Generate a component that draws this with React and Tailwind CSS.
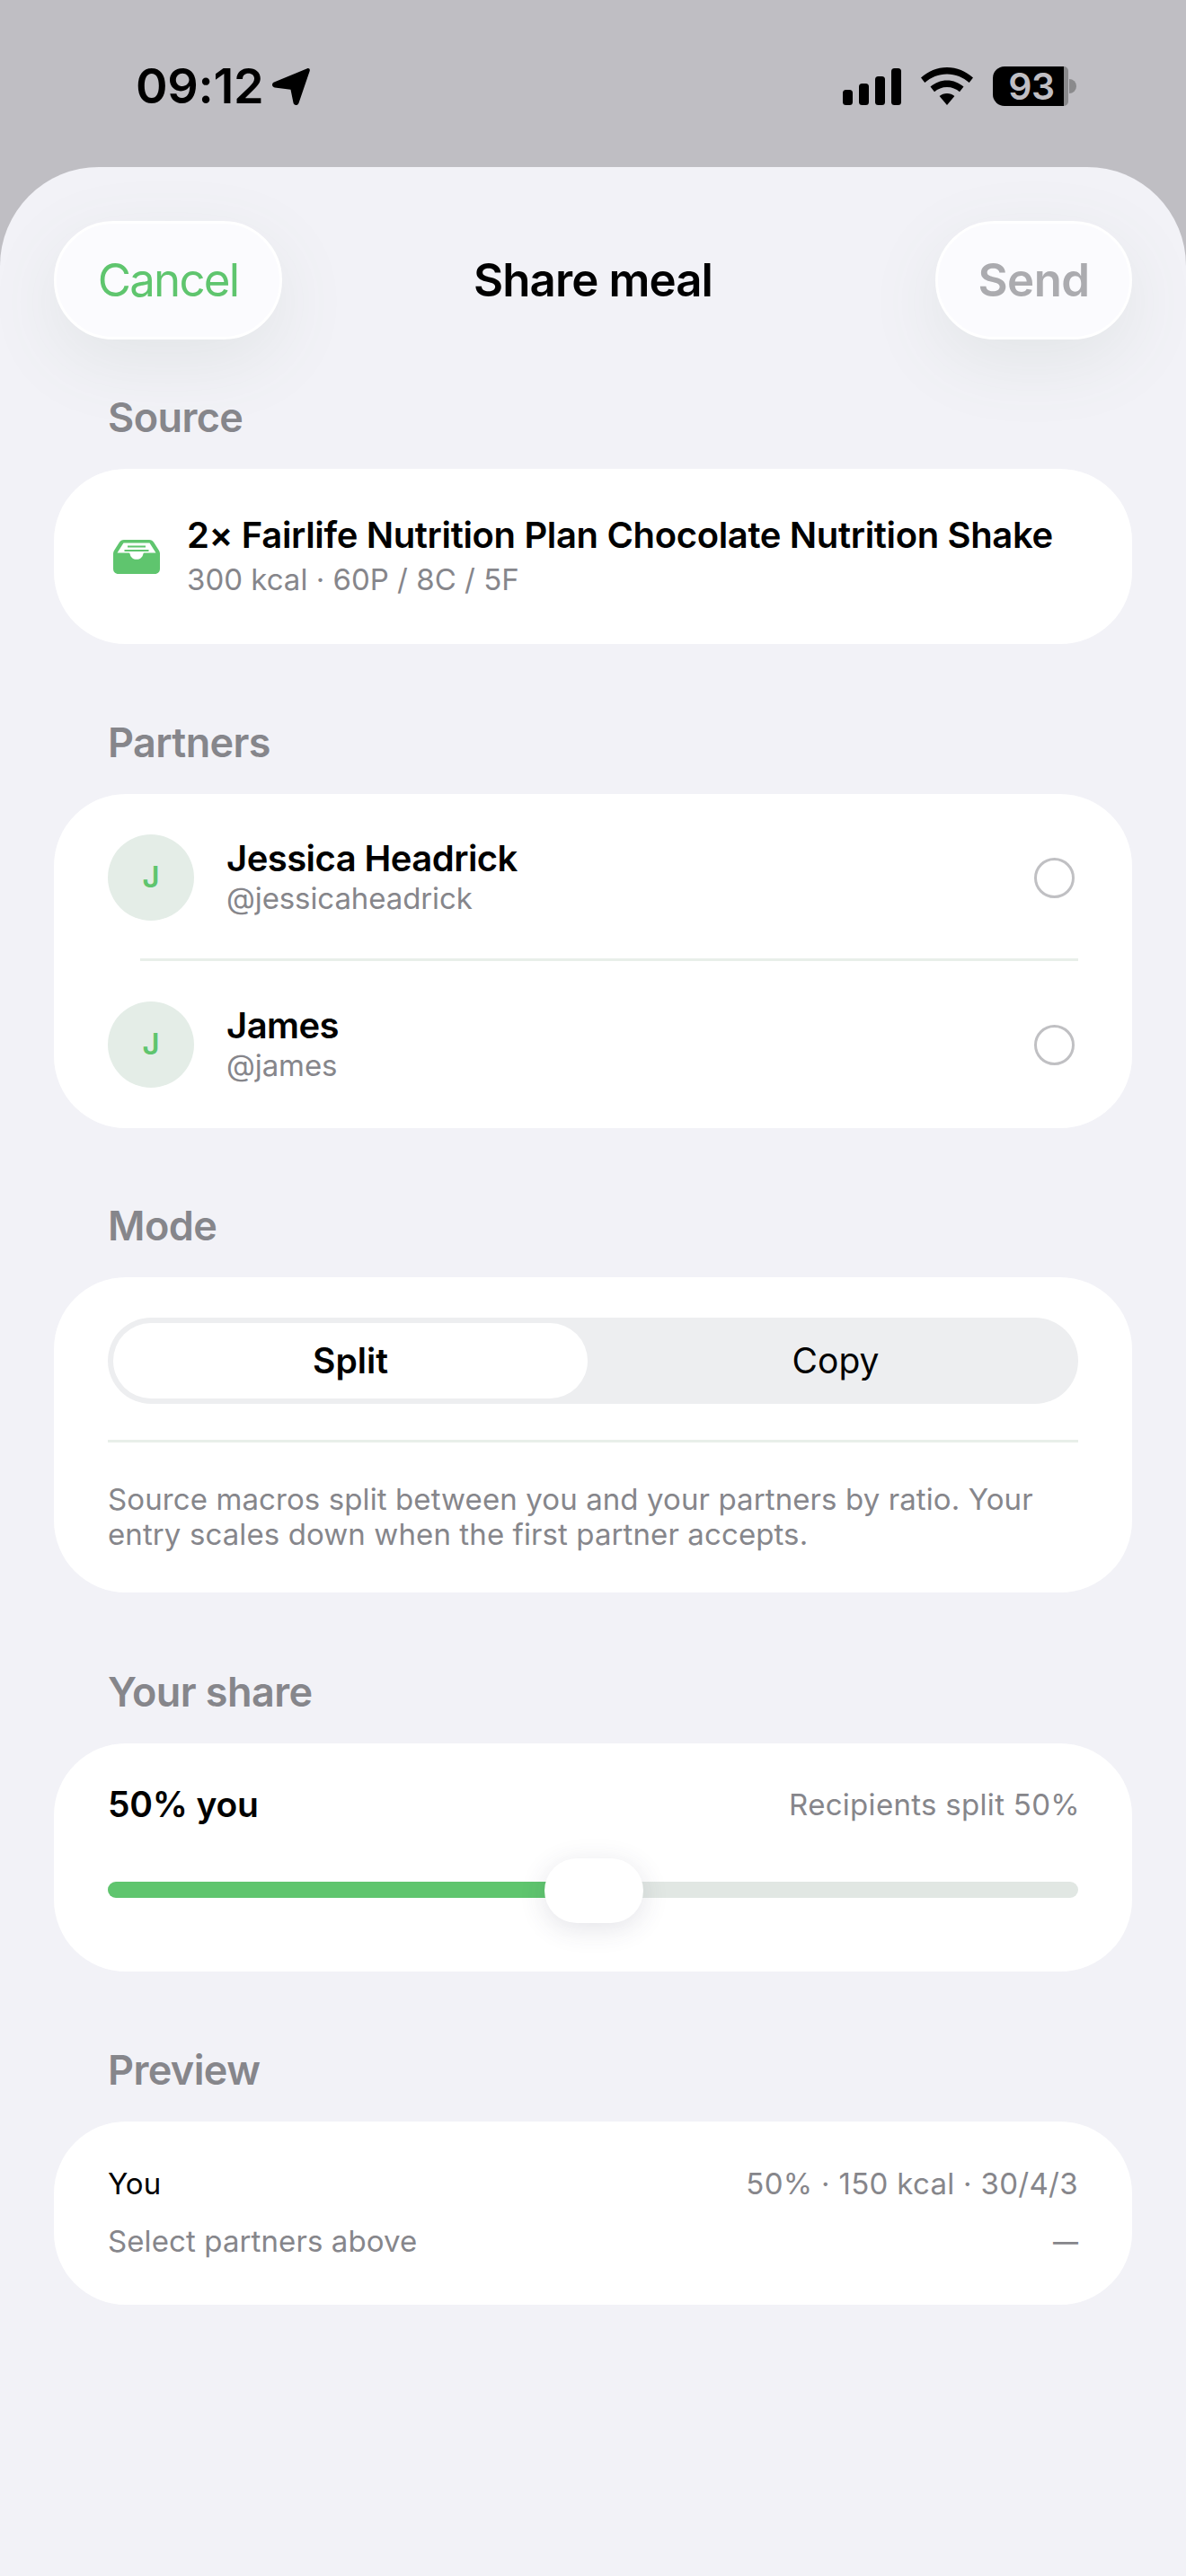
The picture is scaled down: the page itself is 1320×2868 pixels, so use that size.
import React from 'react'

const SectionLabel = ({ children, className = '' }) => (
  <div className={`pl-[120px] text-[45px] leading-[54px] font-semibold text-[#86868b] tracking-[-0.6px] ${className}`}>
    {children}
  </div>
)

const Card = ({ children, className = '' }) => (
  <div className={`bg-white rounded-[80px] ${className}`}>{children}</div>
)

const SignalIcon = () => (
  <svg width="65" height="41" viewBox="0 0 65 41" fill="#000">
    <rect x="0" y="24" width="11" height="17" rx="3.5" />
    <rect x="18" y="17" width="11" height="24" rx="3.5" />
    <rect x="36" y="9" width="11" height="32" rx="3.5" />
    <rect x="54" y="0" width="11" height="41" rx="3.5" />
  </svg>
)

const WifiIcon = () => (
  <svg width="58" height="42" viewBox="0 0 58 42" fill="#000">
    <path d="M29 0C18 0 8 4.300 0 11.500L4.300 17C11 11 19.500 7.400 29 7.400S47 11 53.700 17L58 11.500C50 4.300 40 0 29 0Z" />
    <path d="M29 14.500C22 14.500 15.500 17.200 10.500 21.600L15 27.200C18.700 24 23.600 22 29 22S39.300 24 43 27.200L47.500 21.600C42.500 17.200 36 14.500 29 14.500Z" />
    <path d="M29 29C25.800 29 22.900 30.100 20.600 32L29 42L37.400 32C35.100 30.100 32.200 29 29 29Z" />
  </svg>
)

const LocationIcon = () => (
  <svg width="42" height="41" viewBox="0 0 42 41" fill="#000">
    <path d="M39 0.300C40.800 -0.400 42.300 1 41.700 2.900L29.500 38.700C28.400 41.800 24.100 41.800 23.500 38.500L20.500 23.700L2.800 21.400C-0.500 20.900 -1 17 2 15.600Z" />
  </svg>
)

const TrayIcon = () => (
  <svg width="52" height="38" viewBox="0 0 52 38">
    <path
      fill="#5fc56e"
      d="M12 0H40C42.500 0 44 1 45.300 3L51 12C51.700 13 52 14.200 52 15.500V32C52 35.500 50 38 46 38H6C2 38 0 35.500 0 32V15.500C0 14.200 0.300 13 1 12L6.700 3C8 1 9.500 0 12 0Z"
    />
    <path
      fill="#fff"
      d="M11.500 3.500H40.500L47.500 14.500H35C34 14.500 33.500 15 33.300 16C32.600 19.500 29.800 21.800 26 21.800S19.400 19.500 18.700 16C18.500 15 18 14.500 17 14.500H4.500Z"
    />
    <rect x="16" y="6.500" width="20" height="2" fill="#5fc56e" />
    <rect x="12.500" y="11" width="27" height="2" fill="#5fc56e" />
  </svg>
)

const Battery = () => (
  <div className="flex items-center">
    <div className="w-[79px] h-[44px] rounded-l-[13px] bg-black flex items-center justify-center pl-[7px] text-[41px] font-semibold text-[#bfbec3] leading-[44px] tracking-[-0.5px]">
      93
    </div>
    <div className="w-[5px] h-[44px] rounded-r-[5px] bg-[#8a8a8c]" />
    <div className="w-[8px] h-[16px] ml-[1px] rounded-r-full bg-[#8a8a8c]" />
  </div>
)

const Partner = ({ name, handle }) => (
  <div className="flex items-center pl-[60px] pr-[64px] h-[186px]">
    <div className="w-[96px] h-[96px] rounded-full bg-[#e4ede7] flex items-center justify-center text-[33px] font-semibold text-[#5fc56e]">
      J
    </div>
    <div className="ml-[36px] flex-1">
      <div className="text-[40px] leading-[46px] font-semibold text-black tracking-[-0.55px]">{name}</div>
      <div className="text-[33px] leading-[42px] text-[#86868b] tracking-[-0.1px]">{handle}</div>
    </div>
    <div className="w-[45px] h-[45px] rounded-full border-[3px] border-[#c0c0c3]" />
  </div>
)

export default function App() {
  return (
    <div className="w-[1320px] h-[2868px] bg-[#bfbec3] font-['Inter',sans-serif] overflow-hidden">
      {/* Status bar */}
      <div className="h-[186px] flex items-start justify-between pl-[151px] pr-[122px] pt-[74px]">
        <div className="flex items-center h-[44px]">
          <span className="text-[54px] leading-none font-semibold text-black tracking-[-0.3px]">09:12</span>
          <span className="ml-[10px]"><LocationIcon /></span>
        </div>
        <div className="flex items-center h-[44px] gap-[22px]">
          <SignalIcon />
          <WifiIcon />
          <Battery />
        </div>
      </div>

      {/* Sheet */}
      <div className="h-[2682px] bg-[#f2f2f7] rounded-t-[110px]">
        <div className="grid grid-cols-[1fr_auto_1fr] items-center px-[60px] pt-[60px]">
          <button className="justify-self-start w-[254px] h-[132px] rounded-[66px] bg-[#fbfbfe] border-[3px] border-white text-[51px] text-[#5fc56e] tracking-[-1.8px] shadow-[0_24px_80px_rgba(95,130,100,0.1)]">
            Cancel
          </button>
          <div className="text-[51px] font-semibold text-black tracking-[-0.9px]">Share meal</div>
          <button className="justify-self-end w-[219px] h-[132px] rounded-[66px] bg-[#fbfbfe] border-[3px] border-white text-[51px] font-semibold text-[#ababaf] tracking-[-0.6px] shadow-[0_24px_80px_rgba(95,130,100,0.1)]">
            Send
          </button>
        </div>

        <SectionLabel className="mt-[60px]">Source</SectionLabel>
        <div className="px-[60px] mt-[30px]">
          <Card className="h-[195px] flex items-center pl-[66px]">
            <TrayIcon />
            <div className="ml-[30px]">
              <div className="text-[40px] leading-[46px] font-semibold text-black tracking-[-0.35px]">
                2× Fairlife Nutrition Plan Chocolate Nutrition Shake
              </div>
              <div className="mt-[5px] text-[33px] leading-[42px] text-[#86868b]">300 kcal · 60P / 8C / 5F</div>
            </div>
          </Card>
        </div>

        <SectionLabel className="mt-[83px]">Partners</SectionLabel>
        <div className="px-[60px] mt-[30px]">
          <Card>
            <Partner name="Jessica Headrick" handle="@jessicaheadrick" />
            <div className="-mt-[3px] ml-[96px] mr-[60px] h-[3px] bg-[#e8efe9]" />
            <Partner name="James" handle="@james" />
          </Card>
        </div>

        <SectionLabel className="mt-[82px]">Mode</SectionLabel>
        <div className="px-[60px] mt-[30px]">
          <Card className="h-[351px] px-[60px] pt-[45px]">
            <div className="h-[96px] rounded-[48px] bg-[#edeef0] flex text-[39px] text-black">
              <div className="w-1/2 flex p-[6px]">
                <div className="flex-1 rounded-[42px] bg-white flex items-center justify-center font-semibold">Split</div>
              </div>
              <div className="w-1/2 flex items-center justify-center">Copy</div>
            </div>
            <div className="mt-[40px] h-[3px] bg-[#e8efe9]" />
            <p className="mt-[44px] text-[33px] leading-[39px] text-[#86868b] tracking-[0.1px]">
              Source macros split between you and your partners by ratio. Your entry scales down when the first partner accepts.
            </p>
          </Card>
        </div>

        <SectionLabel className="mt-[84px]">Your share</SectionLabel>
        <div className="px-[60px] mt-[30px]">
          <Card className="h-[254px] px-[60px] pt-[44px]">
            <div className="flex items-center justify-between h-[48px]">
              <div className="text-[39px] font-semibold text-black tracking-[-0.2px]">50% you</div>
              <div className="text-[33px] text-[#86868b] tracking-[0.3px] -mr-[2px] mt-[2px]">Recipients split 50%</div>
            </div>
            <div className="relative mt-[62px] h-[18px] rounded-full bg-[#e1e7e3]">
              <div className="h-full rounded-l-full bg-[#5fc56e]" style={{ width: '50%' }} />
              <div className="absolute left-[486px] top-[-26px] w-[110px] h-[72px] rounded-[36px] bg-white shadow-[0_6px_30px_rgba(60,60,90,0.14)]" />
            </div>
          </Card>
        </div>

        <SectionLabel className="mt-[83px]">Preview</SectionLabel>
        <div className="px-[60px] mt-[30px]">
          <Card className="h-[204px] px-[60px] pt-[38px]">
            <div className="flex items-center justify-between h-[64px]">
              <div className="text-[33px] text-black">You</div>
              <div className="text-[33px] text-[#86868b] tracking-[0.3px]">50% · 150 kcal · 30/4/3</div>
            </div>
            <div className="flex items-center justify-between h-[64px]">
              <div className="text-[33px] text-[#86868b] tracking-[0.1px]">Select partners above</div>
              <div className="text-[28px] font-medium text-[#86868b]">—</div>
            </div>
          </Card>
        </div>
      </div>
    </div>
  )
}
